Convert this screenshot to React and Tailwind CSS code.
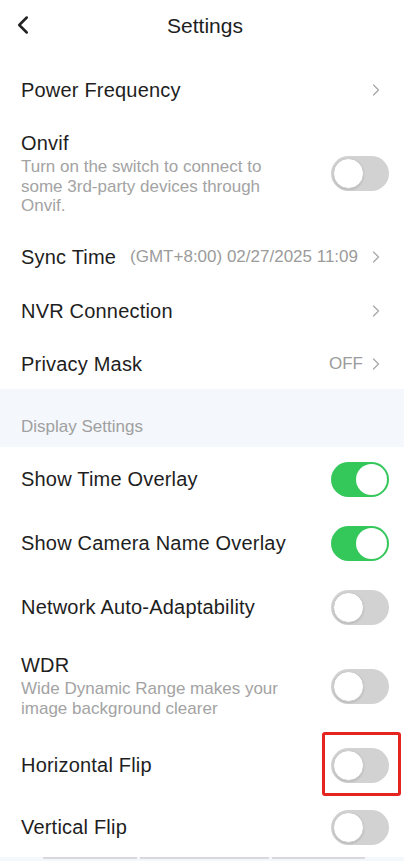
import { ChevronLeft, ChevronRight } from 'lucide-react';

const font = { fontFamily: '"Liberation Sans", Arial, sans-serif' };

function Toggle({ on }) {
  return (
    <div
      className={`relative w-[58px] h-[35px] rounded-full shrink-0 ${
        on ? 'bg-[#34c759]' : 'bg-[#d2d2d2]'
      }`}
    >
      <div
        className={`absolute top-[2px] w-[31px] h-[31px] rounded-full bg-white ${
          on ? 'right-[2px]' : 'left-[2px] border border-[#c8c8c8] shadow-[0_1px_2px_rgba(0,0,0,0.12)]'
        }`}
      />
    </div>
  );
}

function Arrow() {
  return <ChevronRight size={20} strokeWidth={1.5} className="text-[#a8a8a8] shrink-0" />;
}

function LinkRow({ label, value, h = 'h-[54px]', gap = 'mr-[8px]' }) {
  return (
    <div className={`${h} flex items-center pl-[21px] pr-[18px] shrink-0`}>
      <span className="text-[20px] text-[#1e1e1e] tracking-[0.2px]">{label}</span>
      <div className="flex-1" />
      {value && <span className={`text-[17px] text-[#9b9b9b] ${gap}`}>{value}</span>}
      <Arrow />
    </div>
  );
}

function ToggleRow({ label, on, boxed, h = 'h-[64px]' }) {
  return (
    <div className={`${h} flex items-center pl-[21px] pr-[15px] shrink-0`}>
      <span className="text-[20px] text-[#1e1e1e] tracking-[0.2px] flex-1">{label}</span>
      {boxed ? (
        <div className="relative">
          <Toggle on={on} />
          <div className="absolute -left-[9px] -right-[12px] -top-[16px] -bottom-[13px] border-[3px] border-[#e6241f] rounded-[3px]" />
        </div>
      ) : (
        <Toggle on={on} />
      )}
    </div>
  );
}

function DescRow({ label, desc, on, h }) {
  return (
    <div className={`flex items-center pl-[21px] pr-[15px] shrink-0 ${h}`}>
      <div className="flex-1 self-start pt-[14px]">
        <div className="text-[20px] leading-[24px] text-[#1e1e1e] tracking-[0.2px]">{label}</div>
        <div className="text-[17px] leading-[19.5px] text-[#a3a3a3] w-[266px] mt-[2px]">{desc}</div>
      </div>
      <Toggle on={on} />
    </div>
  );
}

export default function App() {
  return (
    <div className="w-[404px] h-[861px] bg-white overflow-hidden flex flex-col" style={font}>
      <div className="relative h-[52px] flex items-center justify-center shrink-0">
        <ChevronLeft size={30} strokeWidth={2} className="absolute left-[8px] top-[10px] text-[#222]" />
        <span className="text-[21px] text-[#1e1e1e] ml-[6px]">Settings</span>
      </div>
      <div className="h-[11px] shrink-0" />

      <LinkRow label="Power Frequency" />
      <DescRow
        label="Onvif"
        desc="Turn on the switch to connect to some 3rd-party devices through Onvif."
        on={false}
        h="h-[113px]"
      />
      <LinkRow label="Sync Time" value="(GMT+8:00) 02/27/2025 11:09" />
      <LinkRow label="NVR Connection" />
      <LinkRow label="Privacy Mask" value="OFF" h="h-[51px]" gap="mr-[3px]" />

      <div className="h-[58px] shrink-0 bg-[#f4f7fc] flex items-end pl-[21px] pb-[8px]">
        <span className="text-[17px] text-[#a0a0a0]">Display Settings</span>
      </div>

      <ToggleRow label="Show Time Overlay" on />
      <ToggleRow label="Show Camera Name Overlay" on />
      <ToggleRow label="Network Auto-Adaptability" on={false} />
      <DescRow
        label="WDR"
        desc="Wide Dynamic Range makes your image background clearer"
        on={false}
        h="h-[94px]"
      />
      <ToggleRow label="Horizontal Flip" on={false} boxed />
      <ToggleRow label="Vertical Flip" on={false} h="h-[60px]" />

      <div className="flex-1 bg-[#f4f7fc] flex items-start">
        <div className="ml-[43px] w-[94px] h-[2px] bg-[#d6d8dc]" />
        <div className="ml-[3px] w-[129px] h-[2px] bg-[#d6d8dc]" />
        <div className="ml-[3px] w-[93px] h-[2px] bg-[#d6d8dc]" />
      </div>
    </div>
  );
}
